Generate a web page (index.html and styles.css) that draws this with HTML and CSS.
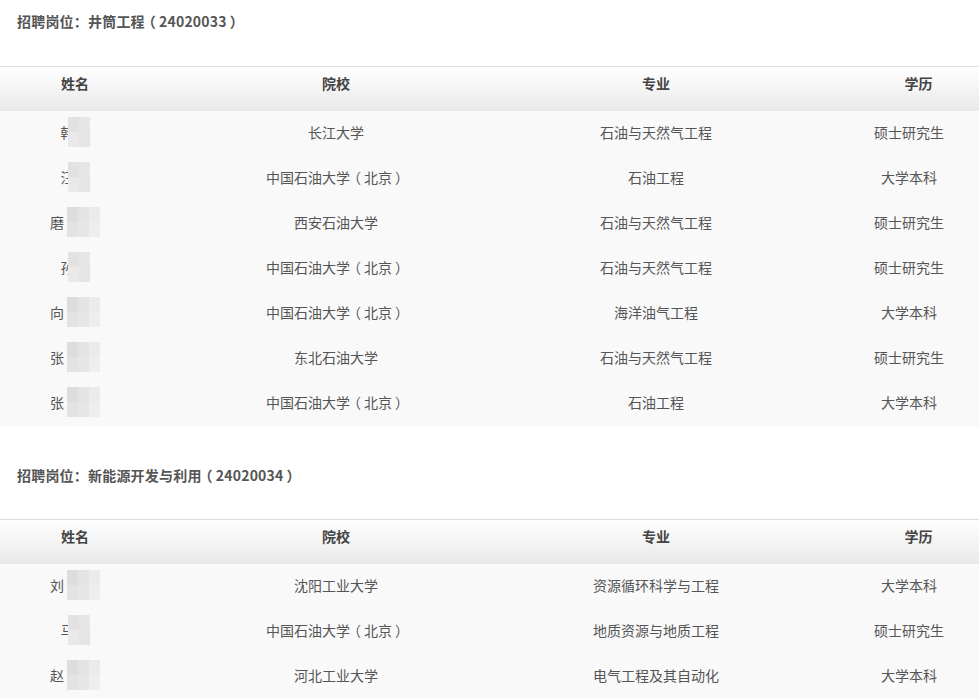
FILE: index.html
```html
<!DOCTYPE html>
<html lang="zh-CN">
<head>
<meta charset="utf-8">
<title>招聘岗位</title>
<link rel="stylesheet" href="styles.css">
</head>
<body>
<section class="post">
  <h2 class="post-title">招聘岗位：井筒工程<span class="po">（</span>24020033<span class="pc">）</span></h2>
  <div class="table">
    <div class="row head">
      <div class="cell">姓名</div><div class="cell">院校</div><div class="cell">专业</div><div class="cell">学历</div>
    </div>
    <div class="row"><div class="cell"><span class="name">韩<span class="mosaic m2"><i></i><i></i><i></i><i></i></span></span></div><div class="cell">长江大学</div><div class="cell">石油与天然气工程</div><div class="cell">硕士研究生</div></div>
    <div class="row"><div class="cell"><span class="name">汪<span class="mosaic m2"><i></i><i></i><i></i><i></i></span></span></div><div class="cell">中国石油大学<span class="po">（</span>北京<span class="pc">）</span></div><div class="cell">石油工程</div><div class="cell">大学本科</div></div>
    <div class="row"><div class="cell"><span class="name">磨<span class="mosaic m3"><i></i><i></i><i></i><i></i><i></i><i></i></span></span></div><div class="cell">西安石油大学</div><div class="cell">石油与天然气工程</div><div class="cell">硕士研究生</div></div>
    <div class="row"><div class="cell"><span class="name">孙<span class="mosaic m2"><i></i><i></i><i></i><i></i></span></span></div><div class="cell">中国石油大学<span class="po">（</span>北京<span class="pc">）</span></div><div class="cell">石油与天然气工程</div><div class="cell">硕士研究生</div></div>
    <div class="row"><div class="cell"><span class="name">向<span class="mosaic m3"><i></i><i></i><i></i><i></i><i></i><i></i></span></span></div><div class="cell">中国石油大学<span class="po">（</span>北京<span class="pc">）</span></div><div class="cell">海洋油气工程</div><div class="cell">大学本科</div></div>
    <div class="row"><div class="cell"><span class="name">张<span class="mosaic m3"><i></i><i></i><i></i><i></i><i></i><i></i></span></span></div><div class="cell">东北石油大学</div><div class="cell">石油与天然气工程</div><div class="cell">硕士研究生</div></div>
    <div class="row"><div class="cell"><span class="name">张<span class="mosaic m3"><i></i><i></i><i></i><i></i><i></i><i></i></span></span></div><div class="cell">中国石油大学<span class="po">（</span>北京<span class="pc">）</span></div><div class="cell">石油工程</div><div class="cell">大学本科</div></div>
  </div>
</section>
<section class="post next">
  <h2 class="post-title">招聘岗位：新能源开发与利用<span class="po">（</span>24020034<span class="pc">）</span></h2>
  <div class="table">
    <div class="row head">
      <div class="cell">姓名</div><div class="cell">院校</div><div class="cell">专业</div><div class="cell">学历</div>
    </div>
    <div class="row"><div class="cell"><span class="name">刘<span class="mosaic m3"><i></i><i></i><i></i><i></i><i></i><i></i></span></span></div><div class="cell">沈阳工业大学</div><div class="cell">资源循环科学与工程</div><div class="cell">大学本科</div></div>
    <div class="row"><div class="cell"><span class="name">马<span class="mosaic m2"><i></i><i></i><i></i><i></i></span></span></div><div class="cell">中国石油大学<span class="po">（</span>北京<span class="pc">）</span></div><div class="cell">地质资源与地质工程</div><div class="cell">硕士研究生</div></div>
    <div class="row"><div class="cell"><span class="name">赵<span class="mosaic m3"><i></i><i></i><i></i><i></i><i></i><i></i></span></span></div><div class="cell">河北工业大学</div><div class="cell">电气工程及其自动化</div><div class="cell">大学本科</div></div>
  </div>
</section>
</body>
</html>
```

FILE: styles.css
```css
html, body {
  margin: 0;
  padding: 0;
  background: #fff;
}
body {
  font-family: "Noto Sans CJK SC", "Microsoft YaHei", sans-serif;
  font-size: 14px;
  color: #555;
}
.post {
  padding-top: 11px;
}
.post.next {
  padding-top: 39px;
}
.post-title {
  margin: 0 0 35px 17px;
  font-size: 14px;
  line-height: 20px;
  font-weight: bold;
  color: #555;
  letter-spacing: 0.2px;
}
.post.next .post-title {
  margin-bottom: 34px;
}
.po, .pc {
  font-feature-settings: "halt" 1;
}
.po {
  margin-left: 4px;
  margin-right: 3px;
}
.pc {
  margin-left: 3px;
  margin-right: 4px;
}
.table {
  border-top: 1px solid #dedede;
}
.row {
  display: grid;
  grid-template-columns: 150px 372px 268px 1fr;
  height: 45px;
  background: #f9f9f9;
  align-items: start;
}
.row .cell {
  padding-top: 11px;
}
.row .cell:nth-child(4) {
  padding-left: 49px;
}
.row.head {
  height: 44px;
  background: linear-gradient(to bottom, #ffffff 0%, #f4f4f4 50%, #e8e8e8 100%);
}
.row.head .cell {
  padding-top: 6px;
  font-weight: bold;
  color: #444;
}
.row.head .cell:nth-child(4) {
  padding-left: 68px;
}
.cell {
  text-align: center;
  line-height: 20px;
  white-space: nowrap;
}
.name {
  display: inline-flex;
  align-items: center;
  vertical-align: top;
  height: 20px;
}
.mosaic {
  display: inline-grid;
  grid-template-rows: 15px 15px;
}
.mosaic.m2 {
  grid-template-columns: 11px 11px;
  margin-left: -7px;
}
.mosaic.m3 {
  grid-template-columns: 11px 11px 11px;
  margin-left: 3px;
}
.mosaic i {
  display: block;
  background: #e2e2e2;
}
.mosaic i:nth-child(2) { background: #e6e6e6; }
.mosaic i:nth-child(3) { background: #e9e9e9; }
.mosaic i:nth-child(4) { background: #e5e5e5; }
.mosaic.m3 i:nth-child(1) { background: #dddddd; }
.mosaic.m3 i:nth-child(2) { background: #e4e4e4; }
.mosaic.m3 i:nth-child(3) { background: #ebebeb; }
.mosaic.m3 i:nth-child(4) { background: #e3e3e3; }
.mosaic.m3 i:nth-child(5) { background: #e6e6e6; }
.mosaic.m3 i:nth-child(6) { background: #eeeeee; }
```
